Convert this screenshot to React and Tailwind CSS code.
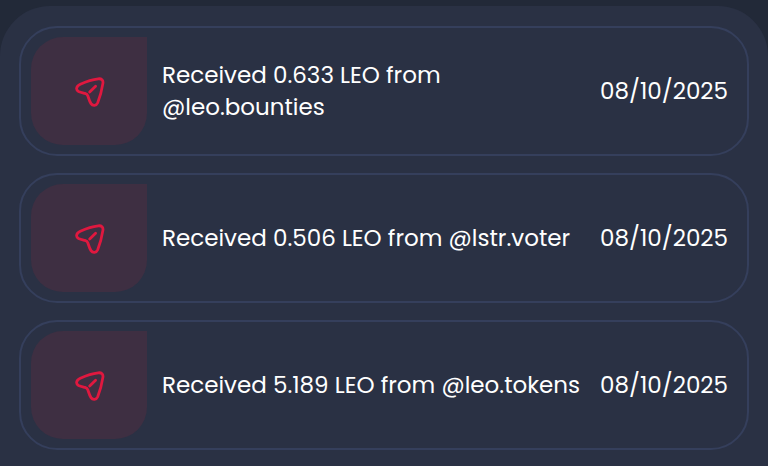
import React from "react";

const transactions = [
  { id: 1, text: "Received 0.633 LEO from @leo.bounties", date: "08/10/2025" },
  { id: 2, text: "Received 0.506 LEO from @lstr.voter", date: "08/10/2025" },
  { id: 3, text: "Received 5.189 LEO from @leo.tokens", date: "08/10/2025" },
];

const SendIcon = () => (
  <svg
    viewBox="0 0 32 32"
    className="h-8 w-8"
    fill="none"
    stroke="currentColor"
    strokeWidth="2.8"
    strokeLinecap="round"
    strokeLinejoin="round"
    aria-hidden="true"
  >
    <path d="M7.3 9.2C13 6.6 19 4.5 25.2 3.8C28.6 3.4 30.4 5.2 29.9 8.4C28.9 14.8 27.2 21.4 24.7 27.7C23.3 31 19.7 31.1 18 28.6C16.3 26 15.7 23.3 14.8 20.7C14.3 19.3 13.3 18.8 12 18.4C9.7 17.8 7.6 17.4 5.5 16.4C2.6 14.9 3 11.2 7.3 9.2Z" />
    <path d="M16.7 17L22.6 11.2" />
  </svg>
);

const TransactionRow = ({ text, date }) => {
  return (
    <li className="flex items-center rounded-[38px] border-2 border-[#353f5c] py-[9px] pr-[19px] pl-[10px]">
      <div className="flex h-[108px] w-[116px] shrink-0 items-center justify-center rounded-[32px] rounded-tr-none bg-[#3e2f42] text-[#e0183f]">
        <SendIcon />
      </div>
      <p className="ml-[15px] flex-1 pr-4">{text}</p>
      <time className="shrink-0">{date}</time>
    </li>
  );
};

export default function App() {
  return (
    <div className="min-h-screen bg-[#222938] pt-[6px] font-['Poppins','Inter',sans-serif] text-[23px] leading-8 font-normal text-white">
      <main className="min-h-[460px] rounded-t-[50px] bg-[#2a3144] px-[19px] pt-5 pb-[14px]">
        <ul className="flex flex-col gap-[17px]">
          {transactions.map((tx) => (
            <TransactionRow key={tx.id} text={tx.text} date={tx.date} />
          ))}
        </ul>
      </main>
    </div>
  );
}
